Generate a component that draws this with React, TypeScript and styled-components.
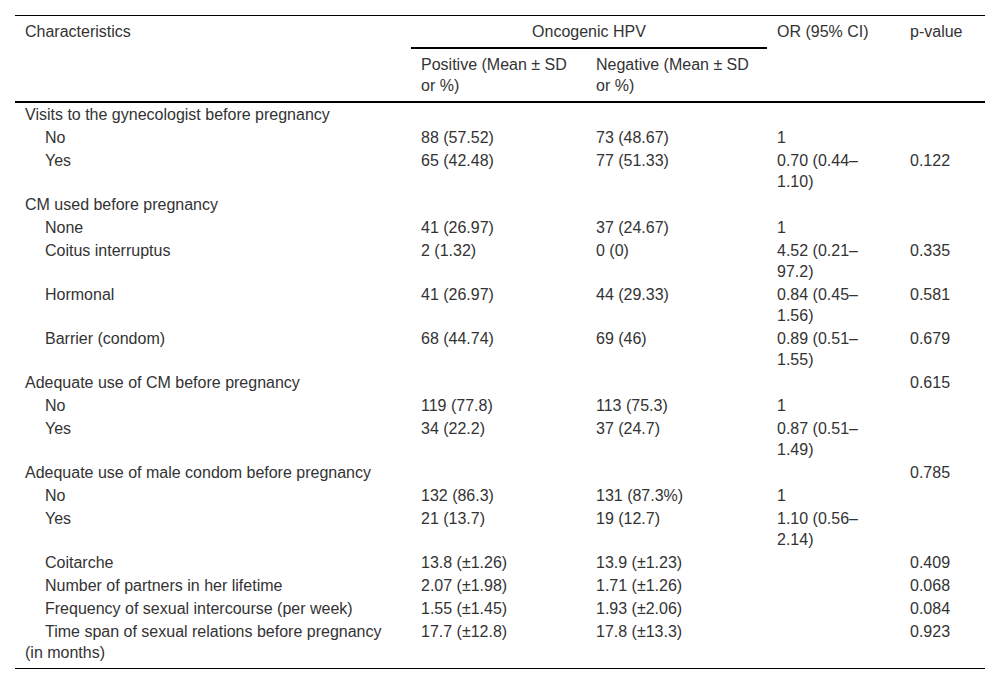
import styled, { createGlobalStyle } from "styled-components";

type Row = {
  label: string;
  sub?: boolean;
  pos?: string;
  neg?: string;
  or?: string;
  p?: string;
};

const rows: Row[] = [
  { label: "Visits to the gynecologist before pregnancy" },
  { label: "No", sub: true, pos: "88 (57.52)", neg: "73 (48.67)", or: "1" },
  { label: "Yes", sub: true, pos: "65 (42.48)", neg: "77 (51.33)", or: "0.70 (0.44–1.10)", p: "0.122" },
  { label: "CM used before pregnancy" },
  { label: "None", sub: true, pos: "41 (26.97)", neg: "37 (24.67)", or: "1" },
  { label: "Coitus interruptus", sub: true, pos: "2 (1.32)", neg: "0 (0)", or: "4.52 (0.21–97.2)", p: "0.335" },
  { label: "Hormonal", sub: true, pos: "41 (26.97)", neg: "44 (29.33)", or: "0.84 (0.45–1.56)", p: "0.581" },
  { label: "Barrier (condom)", sub: true, pos: "68 (44.74)", neg: "69 (46)", or: "0.89 (0.51–1.55)", p: "0.679" },
  { label: "Adequate use of CM before pregnancy", p: "0.615" },
  { label: "No", sub: true, pos: "119 (77.8)", neg: "113 (75.3)", or: "1" },
  { label: "Yes", sub: true, pos: "34 (22.2)", neg: "37 (24.7)", or: "0.87 (0.51–1.49)" },
  { label: "Adequate use of male condom before pregnancy", p: "0.785" },
  { label: "No", sub: true, pos: "132 (86.3)", neg: "131 (87.3%)", or: "1" },
  { label: "Yes", sub: true, pos: "21 (13.7)", neg: "19 (12.7)", or: "1.10 (0.56–2.14)" },
  { label: "Coitarche", sub: true, pos: "13.8 (±1.26)", neg: "13.9 (±1.23)", p: "0.409" },
  { label: "Number of partners in her lifetime", sub: true, pos: "2.07 (±1.98)", neg: "1.71 (±1.26)", p: "0.068" },
  { label: "Frequency of sexual intercourse (per week)", sub: true, pos: "1.55 (±1.45)", neg: "1.93 (±2.06)", p: "0.084" },
  { label: "Time span of sexual relations before pregnancy (in months)", sub: true, pos: "17.7 (±12.8)", neg: "17.8 (±13.3)", p: "0.923" },
];

const App = () => {
  return (
    <>
      <GlobalStyle />
      <Page>
        <Table>
          <colgroup>
            <col style={{ width: 396 }} />
            <col style={{ width: 175 }} />
            <col style={{ width: 181 }} />
            <col style={{ width: 133 }} />
            <col style={{ width: 85 }} />
          </colgroup>
          <Head>
            <tr>
              <HeadCell rowSpan={2}>Characteristics</HeadCell>
              <GroupCell colSpan={2}>Oncogenic HPV</GroupCell>
              <HeadCell rowSpan={2}>OR (95% CI)</HeadCell>
              <HeadCell rowSpan={2}>p-value</HeadCell>
            </tr>
            <tr>
              <HeadCell>Positive (Mean ± SD or %)</HeadCell>
              <HeadCell>Negative (Mean ± SD or %)</HeadCell>
            </tr>
          </Head>
          <Body>
            {rows.map((r, i) => (
              <tr key={i}>
                <Label $sub={r.sub}>{r.label}</Label>
                <Cell>{r.pos}</Cell>
                <Cell>{r.neg}</Cell>
                <Cell>{r.or}</Cell>
                <Cell>{r.p}</Cell>
              </tr>
            ))}
          </Body>
        </Table>
      </Page>
    </>
  );
};

export default App;

const GlobalStyle = createGlobalStyle`
  html, body {
    margin: 0;
    padding: 0;
    background: #fff;
  }
  body {
    font-family: "Liberation Sans", Arial, sans-serif;
    font-size: 16px;
    color: #333;
  }
`;

const Page = styled.main`
  padding: 15px;
`;

const Table = styled.table`
  width: 970px;
  table-layout: fixed;
  border-collapse: collapse;
  border-top: 1px solid #000;
  border-bottom: 1px solid #000;
  font-family: "Liberation Sans", Arial, sans-serif;
  font-size: 16px;
  line-height: 21px;
  color: #333;
`;

const Head = styled.thead`
  border-bottom: 2px solid #000;
`;

const HeadCell = styled.th`
  padding: 5px 10px;
  text-align: left;
  vertical-align: top;
  font-weight: 400;
`;

const GroupCell = styled.th`
  padding: 5px 10px;
  text-align: center;
  vertical-align: top;
  font-weight: 400;
  border-bottom: 2px solid #000;
`;

const Body = styled.tbody`
  tr:last-child td {
    padding-bottom: 5px;
  }
`;

const Cell = styled.td`
  padding: 1px 10px;
  vertical-align: top;
  text-align: left;
`;

const Label = styled.td<{ $sub?: boolean }>`
  padding: 1px 10px;
  vertical-align: top;
  text-indent: ${(p) => (p.$sub ? "20px" : "0")};
`;
